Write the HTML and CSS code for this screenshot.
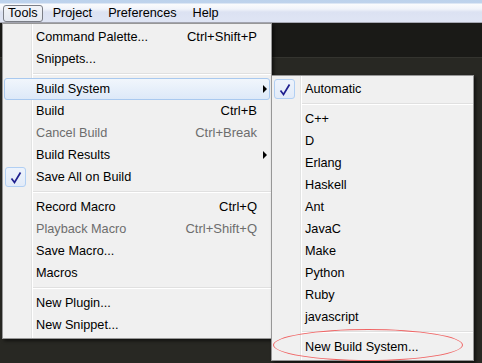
FILE: index.html
```html
<!DOCTYPE html>
<html lang="en">
<head>
  <meta charset="UTF-8">
  <title>Tools - Build System</title>
  <link rel="stylesheet" href="styles.css">
</head>
<body>
  <div class="menubar">
    <span class="top-item open">Tools</span>
    <span class="top-item">Project</span>
    <span class="top-item">Preferences</span>
    <span class="top-item">Help</span>
  </div>

  <div class="editor">
    <div class="tabbar"></div>
  </div>

  <div class="menu main-menu">
    <div class="item"><span class="gutter"></span><span class="label">Command Palette...</span><span class="key">Ctrl+Shift+P</span><span class="arrow"></span></div>
    <div class="item"><span class="gutter"></span><span class="label">Snippets...</span><span class="arrow"></span></div>
    <div class="sep"></div>
    <div class="item active"><span class="gutter"></span><span class="label">Build System</span><span class="arrow"><i class="tri"></i></span></div>
    <div class="item"><span class="gutter"></span><span class="label">Build</span><span class="key">Ctrl+B</span><span class="arrow"></span></div>
    <div class="item disabled"><span class="gutter"></span><span class="label">Cancel Build</span><span class="key">Ctrl+Break</span><span class="arrow"></span></div>
    <div class="item"><span class="gutter"></span><span class="label">Build Results</span><span class="arrow"><i class="tri"></i></span></div>
    <div class="item"><span class="gutter"><span class="check"><svg width="20" height="20" viewBox="0 0 20 20"><path d="M5.5 10.5 L8.5 14.5 L14.5 4.5" fill="none" stroke="#1f1f8f" stroke-width="1.7"/></svg></span></span><span class="label">Save All on Build</span><span class="arrow"></span></div>
    <div class="sep"></div>
    <div class="item"><span class="gutter"></span><span class="label">Record Macro</span><span class="key">Ctrl+Q</span><span class="arrow"></span></div>
    <div class="item disabled"><span class="gutter"></span><span class="label">Playback Macro</span><span class="key">Ctrl+Shift+Q</span><span class="arrow"></span></div>
    <div class="item"><span class="gutter"></span><span class="label">Save Macro...</span><span class="arrow"></span></div>
    <div class="item"><span class="gutter"></span><span class="label">Macros</span><span class="arrow"></span></div>
    <div class="sep"></div>
    <div class="item"><span class="gutter"></span><span class="label">New Plugin...</span><span class="arrow"></span></div>
    <div class="item"><span class="gutter"></span><span class="label">New Snippet...</span><span class="arrow"></span></div>
  </div>

  <div class="menu sub-menu">
    <div class="item"><span class="gutter"><span class="check"><svg width="20" height="20" viewBox="0 0 20 20"><path d="M5.5 10.5 L8.5 14.5 L14.5 4.5" fill="none" stroke="#1f1f8f" stroke-width="1.7"/></svg></span></span><span class="label">Automatic</span></div>
    <div class="sep"></div>
    <div class="item"><span class="gutter"></span><span class="label">C++</span></div>
    <div class="item"><span class="gutter"></span><span class="label">D</span></div>
    <div class="item"><span class="gutter"></span><span class="label">Erlang</span></div>
    <div class="item"><span class="gutter"></span><span class="label">Haskell</span></div>
    <div class="item"><span class="gutter"></span><span class="label">Ant</span></div>
    <div class="item"><span class="gutter"></span><span class="label">JavaC</span></div>
    <div class="item"><span class="gutter"></span><span class="label">Make</span></div>
    <div class="item"><span class="gutter"></span><span class="label">Python</span></div>
    <div class="item"><span class="gutter"></span><span class="label">Ruby</span></div>
    <div class="item"><span class="gutter"></span><span class="label">javascript</span></div>
    <div class="sep"></div>
    <div class="item"><span class="gutter"></span><span class="label">New Build System...</span></div>
  </div>

  <div class="circle"></div>
</body>
</html>
```

FILE: styles.css
```css
body {
  margin: 0;
  background: #282823;
  font-family: "Liberation Sans", Arial, sans-serif;
  font-size: 12.7px;
  color: #000;
  position: relative;
  height: 363px;
  overflow: hidden;
}

.menubar {
  height: 23px;
  box-sizing: border-box;
  padding: 5px 0 0 3px;
  border-bottom: 1px solid #a7a9b4;
  background: linear-gradient(#bcd2ec 0, #bfd3ec 3px, #fafbfd 4px, #f1f4fa 9px, #dce2f2 12px, #dfe5f4 22px);
  display: flex;
  gap: 4px;
}
.top-item {
  height: 17px;
  line-height: 15px;
  padding: 0 5px;
  box-sizing: border-box;
  border: 1px solid transparent;
  border-radius: 3px;
}
.top-item.open {
  border-color: #7b7e86;
  background: linear-gradient(#f2f4f8, #e4e8f0);
  padding: 0 4px;
}

.editor {
  height: 340px;
}
.tabbar {
  height: 34px;
  background: #1a1a17;
  border-bottom: 1px solid #34342f;
}

.menu {
  position: absolute;
  box-sizing: border-box;
  border: 1px solid #979797;
  padding: 2px 0;
  background:
    linear-gradient(to right, transparent 28px, #e2e3e3 28px, #e2e3e3 29px, #fff 29px, #fff 30px, transparent 30px),
    #f0f0f0;
  box-shadow: 2px 2px 3px rgba(0, 0, 0, 0.55);
}
.main-menu {
  left: 2px;
  top: 23px;
  width: 270px;
}
.sub-menu {
  left: 271px;
  top: 75px;
  width: 203px;
}

.item {
  display: flex;
  align-items: center;
  height: 22px;
  box-sizing: border-box;
  margin: 0 1px;
  padding: 0 2px 1px 0;
  border: 1px solid transparent;
  border-radius: 3px;
  white-space: nowrap;
}
.item.active {
  border-color: #a9c9ef;
  background: linear-gradient(#f1f6fc, #dde9f8);
}
.item.disabled {
  color: #6d6d6d;
}
.gutter {
  width: 31px;
  height: 20px;
  flex: none;
  margin-bottom: -1px;
}
.check {
  display: block;
  width: 21px;
  height: 20px;
  box-sizing: border-box;
  border: 1px solid #b1cff3;
  border-radius: 3px;
  background: linear-gradient(#edf3fc, #e2ebf8);
}
.check svg {
  display: block;
}
.label {
  flex: 1;
}
.key {
  text-align: right;
  font-size: 13px;
}
.arrow {
  width: 10px;
  display: flex;
  justify-content: flex-end;
}
.tri {
  width: 0;
  height: 0;
  border-left: 4px solid #000;
  border-top: 4px solid transparent;
  border-bottom: 4px solid transparent;
}

.sep {
  height: 8px;
  margin-left: 30px;
  background: linear-gradient(transparent 3px, #e0e0e0 3px, #e0e0e0 4px, #fff 4px, #fff 5px, transparent 5px);
}

.circle {
  position: absolute;
  left: 273px;
  top: 329px;
  width: 188px;
  height: 30px;
  border: 1px solid #f06464;
  border-radius: 50%;
}
```
